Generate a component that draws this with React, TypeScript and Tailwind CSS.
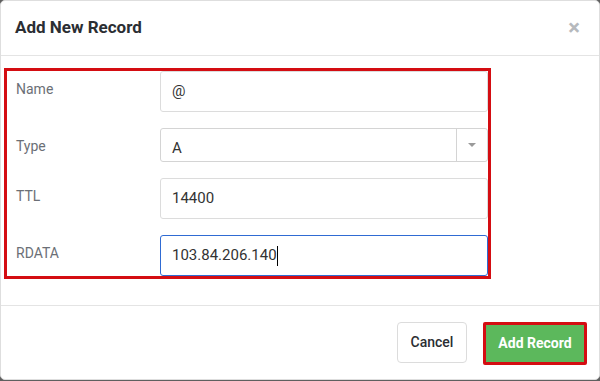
import React from 'react'

interface Field {
  label: string
  value: string
  kind: 'input' | 'select' | 'focus'
}

const fields: Field[] = [
  { label: 'Name', value: '@', kind: 'input' },
  { label: 'Type', value: 'A', kind: 'select' },
  { label: 'TTL', value: '14400', kind: 'input' },
  { label: 'RDATA', value: '103.84.206.140', kind: 'focus' },
]

function FieldBox({ field }: { field: Field }) {
  if (field.kind === 'select') {
    return (
      <div className="flex h-[34px] flex-1 rounded-[3px] border border-[#d4d4d4] bg-white">
        <div className="flex-1 pl-[11px] pt-[7px] text-[15px] leading-6 text-[#333]">{field.value}</div>
        <div className="flex w-[31px] items-center justify-center border-l border-[#d4d4d4]">
          <span className="h-0 w-0 border-x-[4px] border-t-[4px] border-x-transparent border-t-[#9a9a9a]" />
        </div>
      </div>
    )
  }

  const focused = field.kind === 'focus'
  return (
    <div
      className={`flex h-[41px] flex-1 items-center rounded-[3px] border bg-white pl-[11px] text-[15px] text-[#333] ${
        focused ? 'border-[#2f6bd3]' : 'border-[#dcdcdc]'
      }`}
    >
      <span>{field.value}</span>
      {focused && <span className="h-[20px] w-px bg-black" />}
    </div>
  )
}

export default function App() {
  return (
    <div className="h-[381px] w-[600px] bg-[#5f5f5f]" style={{ fontFamily: 'Roboto, "Noto Sans", sans-serif' }}>
      <div className="flex h-[380px] w-[600px] flex-col overflow-hidden rounded-[5px] border border-[#dedede] bg-white">
        {/* Header */}
        <div className="flex h-[55px] items-center justify-between border-b border-[#e4e4e4] pl-[14px] pr-[19px]">
          <h2 className="text-[17px] font-bold text-[#2b2e33]">Add New Record</h2>
          <span className="text-[22px] font-bold leading-none text-[#b6b9bd]">×</span>
        </div>

        {/* Body */}
        <div className="flex-1 border-b border-[#e4e4e4] pl-[3px] pt-[12px]">
          <div className="flex w-[487px] flex-col gap-4 border-[3px] border-[#d40d12]">
            {fields.map((f) => (
              <div key={f.label} className="flex">
                <div className="w-[153px] pl-[9px] pt-[8px] text-[14px] leading-5 text-[#6b6f76]">{f.label}</div>
                <FieldBox field={f} />
              </div>
            ))}
          </div>
        </div>

        {/* Footer */}
        <div className="flex h-[73px] items-center justify-end gap-[16px] pr-[12px] pb-[1px]">
          <button className="h-[41px] w-[70px] rounded-[4px] border border-[#dcdcdc] bg-white text-[14px] font-medium text-[#2b2e33]">
            Cancel
          </button>
          <div className="mt-[2px] h-[43px] w-[104px] rounded-[2px] border-[3px] border-[#d40d12]">
            <button className="h-full w-full bg-[#5cb85c] text-[14px] font-bold text-white">Add Record</button>
          </div>
        </div>
      </div>
    </div>
  )
}
